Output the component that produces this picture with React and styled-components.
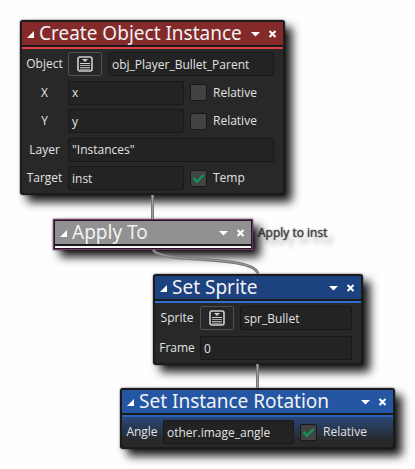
import React, { useId } from "react";
import styled, { createGlobalStyle } from "styled-components";

const GlobalStyle = createGlobalStyle`
  *, *::before, *::after { box-sizing: border-box; }
  body {
    margin: 0;
    background: #fefefe;
    color: #e2e2e2;
    font-family: "Open Sans", "Noto Sans", sans-serif;
    font-size: 12px;
    line-height: 16px;
  }
  button, input { font: inherit; color: inherit; }
`;

const Canvas = styled.main`
  position: relative;
  min-height: 100vh;
  overflow: hidden;
`;

const Wires = styled.svg`
  position: absolute;
  inset: 0;
  width: 415px;
  height: 469px;
  fill: none;
`;

const Node = styled.section`
  position: absolute;
  left: ${(p) => p.$x}px;
  top: ${(p) => p.$y}px;
  width: ${(p) => p.$w}px;
  padding: 2px;
  border-radius: 3px;
  background: #1b1b1b;
  box-shadow: 0 0 2px rgba(0, 0, 0, 0.7), 7px 7px 10px rgba(0, 0, 0, 0.9);
  ${(p) => p.$selected && "outline: 1px solid #7d2f78; outline-offset: -1px; border-radius: 0;"}
`;

const Header = styled.header`
  display: flex;
  align-items: center;
  height: 23px;
  padding: 0 6px 0 5px;
  background: ${(p) => p.$color};
`;

const Title = styled.h2`
  flex: 1;
  margin: 0 0 0 5px;
  color: #f2f2f2;
  font-family: "Noto Sans", "Open Sans", sans-serif;
  font-size: 19px;
  font-weight: 400;
  line-height: 23px;
  white-space: nowrap;
`;

const IconButton = styled.button`
  display: flex;
  padding: 0;
  border: 0;
  background: none;
  color: #fff;
  & + & { margin-left: 8px; }
  svg { display: block; fill: currentColor; }
`;

const Accent = styled.div`
  height: 2px;
  margin-top: 2px;
  background: ${(p) => p.$color};
`;

const Body = styled.div`
  display: flex;
  flex-direction: column;
  justify-content: space-between;
  gap: 4px;
  min-height: ${(p) => p.$minHeight || 0}px;
  padding: 3px 9px 3px 2px;
  border-radius: 0 0 2px 2px;
  background: ${(p) => (p.$tinted ? "linear-gradient(#28477a, #282828 80%)" : "#282828")};
`;

const Row = styled.div`
  display: flex;
  align-items: center;
  gap: 6px;
`;

const Label = styled.label`
  flex: none;
  width: ${(p) => p.$w}px;
  margin-right: -3px;
  text-align: center;
`;

const TextField = styled.input`
  flex: 1;
  min-width: 0;
  height: 24px;
  padding: 0 3px;
  border: 1px solid #181818;
  border-radius: 2px;
  background: #232323;
  outline: none;
`;

const PickButton = styled.button`
  display: grid;
  place-items: center;
  flex: none;
  width: 34px;
  height: 24px;
  padding: 0;
  border: 1px solid #505050;
  border-radius: 2px;
  background: #272727;
`;

const CheckLabel = styled.label`
  display: flex;
  align-items: center;
  flex: none;
  gap: 6px;
  width: 84px;
`;

const Check = styled.input`
  appearance: none;
  width: 17px;
  height: 17px;
  margin: 0;
  border: 1px solid #191919;
  border-radius: 2px;
  background: #424444;
`;

const CheckBox = styled.span`
  display: grid;
  > * { grid-area: 1 / 1; place-self: center; }
  svg { pointer-events: none; visibility: hidden; }
  input:checked + svg { visibility: visible; }
`;

const Note = styled.p`
  position: absolute;
  left: 258px;
  top: 225px;
  margin: 0;
  color: #444;
  text-shadow: 0 0 1px #555, 0 0 2px #999, 6px 7px 4px rgba(0, 0, 0, 0.3);
`;

function NodeHeader({ title, color }) {
  return (
    <Header $color={color}>
      <IconButton aria-label={`Collapse ${title}`}>
        <svg width="7" height="8" viewBox="0 0 7 8"><path d="M7 1V8H0Z" /></svg>
      </IconButton>
      <Title>{title}</Title>
      <IconButton aria-label={`${title} options`}>
        <svg width="9" height="6" viewBox="0 0 9 6"><path d="M0 1H9L4.5 5.5Z" /></svg>
      </IconButton>
      <IconButton aria-label={`Close ${title}`}>
        <svg width="9" height="8" viewBox="0 0 9 8">
          <path d="M1.5 1L7.5 7M7.5 1L1.5 7" stroke="currentColor" strokeWidth="2" />
        </svg>
      </IconButton>
    </Header>
  );
}

function Picker({ label }) {
  return (
    <PickButton aria-label={label}>
      <svg width="16" height="16" viewBox="0 0 16 16" fill="none" stroke="#d0d0d0">
        <rect x="1" y="1" width="14" height="14" rx="2" strokeWidth="1.6" />
        <path d="M5 3H11L8 6Z" fill="#d0d0d0" stroke="none" />
        <path d="M3 7.5H13" strokeWidth="1" />
        <path d="M3 9.5H13M3 11.5H13M3 13.2H13" stroke="#a8a8a8" strokeWidth="1" />
      </svg>
    </PickButton>
  );
}

function Field({ label, value, labelWidth = 41, picker, check, checked }) {
  const id = useId();
  return (
    <Row>
      <Label htmlFor={id} $w={labelWidth}>{label}</Label>
      {picker && <Picker label={`Choose ${label}`} />}
      <TextField id={id} defaultValue={value} />
      {check && (
        <CheckLabel>
          <CheckBox>
            <Check type="checkbox" defaultChecked={checked} />
            <svg width="13" height="11" viewBox="0 0 13 11">
              <path d="M1.500 5L5 8.500L11.500 2" fill="none" stroke="#10965c" strokeWidth="2.4" />
            </svg>
          </CheckBox>
          {check}
        </CheckLabel>
      )}
    </Row>
  );
}

export default function App() {
  return (
    <Canvas>
      <GlobalStyle />
      <Note>Apply to inst</Note>
      <Node $x={120} $y={388} $w={275}>
        <NodeHeader title="Set Instance Rotation" color="#2556a3" />
        <Accent $color="#2b62b8" />
        <Body $tinted>
          <Field label="Angle" value="other.image_angle" labelWidth={36} check="Relative" checked />
        </Body>
      </Node>
      <Node $x={153} $y={274} $w={210}>
        <NodeHeader title="Set Sprite" color="#1c427f" />
        <Accent $color="#2e6fd0" />
        <Body $minHeight={60}>
          <Field label="Sprite" value="spr_Bullet" labelWidth={40} picker />
          <Field label="Frame" value="0" labelWidth={40} />
        </Body>
      </Node>
      <Node $x={53} $y={219} $w={200} $selected>
        <NodeHeader title="Apply To" color="#919191" />
        <Accent $color="#f4f4f4" />
      </Node>
      <Node $x={20} $y={20} $w={265}>
        <NodeHeader title="Create Object Instance" color="#842a2a" />
        <Accent $color="#dd4043" />
        <Body $minHeight={144}>
          <Field label="Object" value="obj_Player_Bullet_Parent" picker />
          <Field label="X" value="x" check="Relative" />
          <Field label="Y" value="y" check="Relative" />
          <Field label="Layer" value={'"Instances"'} />
          <Field label="Target" value="inst" check="Temp" checked />
        </Body>
      </Node>
      <Wires viewBox="0 0 415 469" aria-hidden="true" pointerEvents="none">
        {["#777", "#9c9c9c"].map((stroke, i) => (
          <path
            key={stroke}
            d="M152.500 195V219M153 250C162 264 254 254 258 274M257.500 364V388"
            stroke={stroke}
            strokeWidth={i ? 1 : 3}
          />
        ))}
      </Wires>
    </Canvas>
  );
}
